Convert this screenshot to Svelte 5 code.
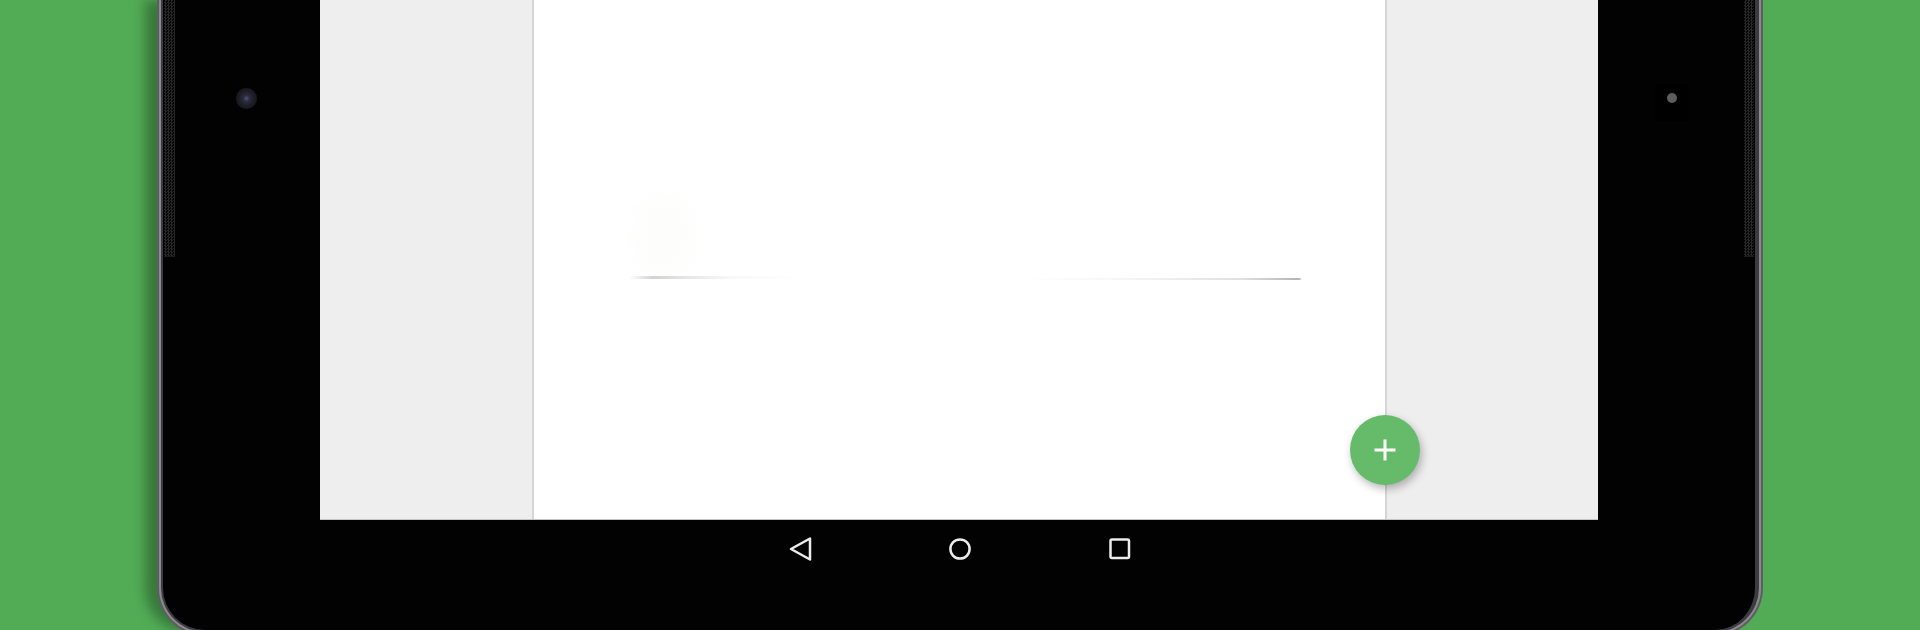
<script lang="ts">
  // nav buttons sit 160px apart around the screen centre
  const navButtons = ['back', 'home', 'recents'];
</script>

<div class="page">
  <div class="tablet">
    <div class="grille left"></div>
    <div class="grille right"></div>
    <div class="camera"></div>
    <div class="sensor-patch"><div class="sensor"></div></div>

    <div class="screen">
      <div class="side"></div>
      <div class="sheet">
        <div class="ghost"></div>
        <div class="smudge smudge-left"></div>
        <div class="smudge smudge-right"></div>
      </div>
      <div class="side"></div>
      <button class="fab" aria-label="Add">
        <svg width="24" height="24" viewBox="0 0 24 24">
          <path d="M12 1.5v21M1.5 12h21" stroke="#fff" stroke-width="3" fill="none" />
        </svg>
      </button>
    </div>

    <nav class="navbar">
      {#each navButtons as name}
        <button class="nav-btn" aria-label={name}>
          <svg width="30" height="30" viewBox="0 0 30 30" fill="none" stroke="#ececec" stroke-width="2.5" stroke-linejoin="round">
            {#if name === 'back'}
              <path d="M25 4.5v21L6 15z" />
            {:else if name === 'home'}
              <circle cx="15" cy="15" r="9.6" />
            {:else}
              <rect x="5.5" y="5.5" width="18.5" height="18.5" rx="1.5" />
            {/if}
          </svg>
        </button>
      {/each}
    </nav>
  </div>
</div>

<style>
  :global(body) {
    margin: 0;
    background: #52ac56;
    overflow: hidden;
  }

  .page {
    height: 630px;
    overflow: hidden;
    padding: 0 161px;
    box-sizing: border-box;
  }

  .tablet {
    position: relative;
    height: 632px;
    box-sizing: border-box;
    padding: 0 157px;
    background: #020202;
    border: solid #3c3c40;
    border-width: 0 4px 2px 2px;
    border-radius: 0 0 44px 44px;
    box-shadow:
      0 0 0 2px #8a8a8e,
      0 0 0 4px #5e5e62,
      -16px 0 12px rgba(20, 50, 22, 0.42);
  }

  .grille {
    position: absolute;
    top: 0;
    width: 11px;
    height: 256px;
    background-color: #0a0a0a;
    background-image: repeating-conic-gradient(#262626 0 25%, #060606 0 50%);
    background-size: 3px 3px;
    border-bottom: 1px solid #1c1c1c;
  }

  .grille.left {
    left: 1px;
  }

  .grille.right {
    right: 1px;
    width: 10px;
  }

  .camera {
    position: absolute;
    left: 73px;
    top: 88px;
    width: 21px;
    height: 21px;
    border-radius: 50%;
    background: radial-gradient(circle, #4a5582 0, #2a2c3c 22%, #1b1b22 55%, #15151a 100%);
  }

  .sensor-patch {
    position: absolute;
    right: 66px;
    top: 84px;
    width: 34px;
    height: 37px;
    background: #000;
    display: flex;
    justify-content: center;
    padding-top: 9px;
    box-sizing: border-box;
  }

  .sensor {
    width: 10px;
    height: 10px;
    border-radius: 50%;
    background: #5e5e5e;
  }

  .screen {
    position: relative;
    height: 520px;
    display: grid;
    grid-template-columns: 212px 1fr 211px;
    border-bottom: 1px solid #c4c4c4;
    box-sizing: border-box;
  }

  .side {
    background: #eeeeee;
  }

  .sheet {
    position: relative;
    background: #fff;
    border: solid #d6d6d6;
    border-width: 0 2px;
  }

  .ghost {
    position: absolute;
    left: 100px;
    top: 195px;
    width: 60px;
    height: 80px;
    background: #fdfdfc;
    border-radius: 50%;
    filter: blur(8px);
  }

  .smudge {
    position: absolute;
    top: 276px;
    height: 3px;
    filter: blur(0.5px);
  }

  .smudge-left {
    left: 95px;
    width: 170px;
    background: linear-gradient(90deg, #fff, #d2d2d2 14%, #e4e4e4 32%, #f8f8f8 60%, #fff);
  }

  .smudge-right {
    left: 490px;
    width: 278px;
    top: 278px;
    height: 2px;
    background: linear-gradient(90deg, #fff, #f4f4f4 40%, #e0e0e0 78%, #b4b4b4 99%, #fff);
  }

  .fab {
    position: absolute;
    left: 1030px;
    top: 415px;
    width: 70px;
    height: 70px;
    padding: 0;
    border: none;
    border-radius: 50%;
    background: #66bb6a;
    box-shadow: 2px 4px 8px rgba(0, 0, 0, 0.28);
    display: flex;
    align-items: center;
    justify-content: center;
  }

  .navbar {
    display: flex;
    justify-content: center;
    gap: 130px;
    padding: 14px 0 0 2px;
  }

  .nav-btn {
    width: 30px;
    height: 30px;
    padding: 0;
    border: none;
    background: none;
    display: block;
  }

  .nav-btn svg {
    display: block;
  }
</style>
